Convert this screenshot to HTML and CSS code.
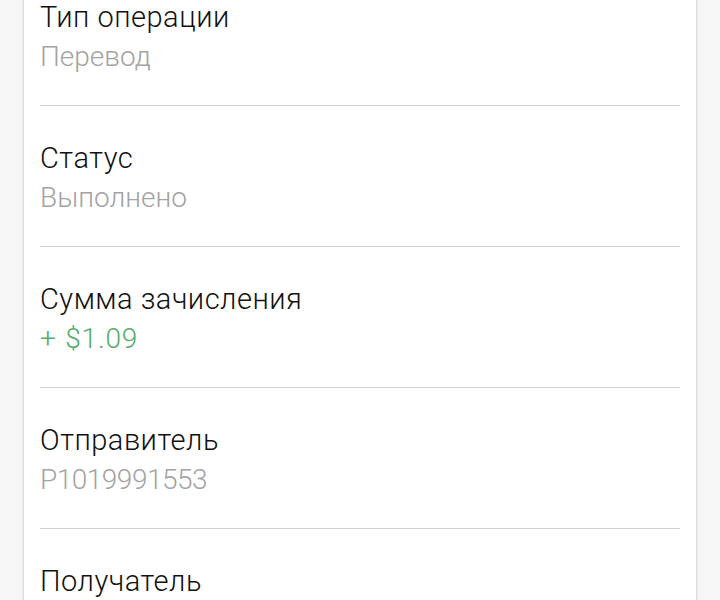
FILE: index.html
```html
<!DOCTYPE html>
<html lang="ru">
<head>
<meta charset="utf-8">
<link rel="stylesheet" href="styles.css">
</head>
<body>
<div class="card">
  <div class="item">
    <div class="label">Тип операции</div>
    <div class="value">Перевод</div>
  </div>
  <div class="item">
    <div class="label">Статус</div>
    <div class="value">Выполнено</div>
  </div>
  <div class="item">
    <div class="label">Сумма зачисления</div>
    <div class="value green">+ $1.09</div>
  </div>
  <div class="item">
    <div class="label">Отправитель</div>
    <div class="value digits">P1019991553</div>
  </div>
  <div class="item">
    <div class="label">Получатель</div>
    <div class="value digits">U0000000000</div>
  </div>
</div>
</body>
</html>
```
FILE: styles.css
```css
html, body {
  margin: 0;
  padding: 0;
  background: #f7f7f7;
  overflow: hidden;
  height: 600px;
}
body {
  font-family: Roboto, "Noto Sans", sans-serif;
  font-weight: 300;
}
.card {
  margin: -35px 24px 0;
  background: #fff;
  padding: 0 16px;
  box-shadow: 0 0 3px rgba(0,0,0,0.25);
}
.item {
  padding: 32px 0 28px;
  border-bottom: 1px solid #d0d0d0;
}
.label {
  font-size: 29px;
  line-height: 40px;
  letter-spacing: 0.5px;
  color: #111;
}
.value {
  font-size: 28px;
  line-height: 40px;
  color: #a3a3a3;
}
.value.digits {
  letter-spacing: -0.5px;
}
.value.green {
  color: #55ab68;
  letter-spacing: 0.8px;
  word-spacing: 1px;
}
```
